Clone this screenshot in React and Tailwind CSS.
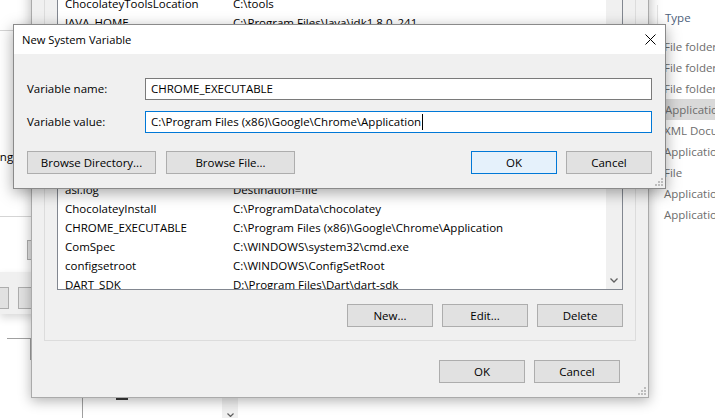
import React from "react"

const topRows = [
  { name: "ChocolateyToolsLocation", value: "C:\\tools" },
  { name: "JAVA_HOME", value: "C:\\Program Files\\Java\\jdk1.8.0_241" },
]

const bottomRows = [
  { name: "asl.log", value: "Destination=file" },
  { name: "ChocolateyInstall", value: "C:\\ProgramData\\chocolatey" },
  { name: "CHROME_EXECUTABLE", value: "C:\\Program Files (x86)\\Google\\Chrome\\Application" },
  { name: "ComSpec", value: "C:\\WINDOWS\\system32\\cmd.exe" },
  { name: "configsetroot", value: "C:\\WINDOWS\\ConfigSetRoot" },
  { name: "DART_SDK", value: "D:\\Program Files\\Dart\\dart-sdk" },
]

const types = [
  "File folder",
  "File folder",
  "File folder",
  "Application",
  "XML Document",
  "Application",
  "File",
  "Application",
  "Application",
]

function Grip() {
  return (
    <svg width="8" height="8" viewBox="0 0 8 8" className="absolute right-[2px] bottom-[2px]">
      <rect x="6" y="0" width="2" height="2" fill="#bdbdbd" />
      <rect x="3" y="3" width="2" height="2" fill="#bdbdbd" />
      <rect x="6" y="3" width="2" height="2" fill="#bdbdbd" />
      <rect x="0" y="6" width="2" height="2" fill="#bdbdbd" />
      <rect x="3" y="6" width="2" height="2" fill="#bdbdbd" />
      <rect x="6" y="6" width="2" height="2" fill="#bdbdbd" />
    </svg>
  )
}

function Btn({ children, w = "w-[86px]", primary = false }) {
  return (
    <div
      className={`${w} h-[23px] flex items-center justify-center border ${
        primary ? "border-[#0078d7] bg-[#e5f1fb]" : "border-[#adadad] bg-[#e1e1e1]"
      }`}
    >
      {children}
    </div>
  )
}

function Row({ name, value }) {
  return (
    <div className="h-[19px] flex items-center shrink-0 whitespace-nowrap">
      <span className="w-[175px] pl-[7px]">{name}</span>
      <span>{value}</span>
    </div>
  )
}

export default function App() {
  return (
    <div className="relative w-[715px] h-[418px] overflow-hidden bg-white text-[11.5px] leading-none text-black font-['Open_Sans',sans-serif]">
      {/* left background window bits */}
      <div className="absolute left-0 top-[30px] w-[40px] h-px bg-[#d5d5d5]" />
      <span className="absolute left-[-24px] top-[151px]">Settings</span>
      <div className="absolute left-0 top-[216px] w-[31px] h-px bg-[#d5d5d5]" />
      <div className="absolute left-[27px] top-[240px] w-[10px] h-[20px] border border-[#adadad] bg-[#e1e1e1]" />
      <div className="absolute left-0 top-[272px] w-[40px] h-[42px] bg-[#f0f0f0] shadow-[0_4px_8px_rgba(0,0,0,0.15)]">
        <div className="absolute left-[-20px] top-[15px] w-[29px] h-[22px] border border-[#adadad] bg-[#e1e1e1]" />
        <div className="absolute left-[18px] top-[15px] w-[30px] h-[22px] border border-[#adadad] bg-[#e1e1e1]" />
      </div>
      <div className="absolute left-[7px] top-[338px] w-[24px] h-px bg-[#a0a0a0]" />
      <div className="absolute left-[30px] top-[338px] w-px h-[22px] bg-[#a0a0a0]" />
      <div className="absolute left-[82px] top-[390px] w-px h-[30px] bg-[#a0a0a0]" />
      <div className="absolute left-[116px] top-[394px] w-[12px] h-[6px] bg-[#3a3a3a]" />
      <div className="absolute left-[222px] top-[390px] w-[16px] h-[30px] bg-[#f0f0f0] flex items-end justify-center pb-[3px]">
        <svg width="7" height="4" viewBox="0 0 7 4">
          <polyline points="0.5,0.5 3.5,3.5 6.5,0.5" fill="none" stroke="#606060" strokeWidth="1.2" />
        </svg>
      </div>

      {/* explorer behind on the right */}
      <div className="absolute left-[657px] top-0 w-[80px] h-full text-[#6d6d6d] text-[11.5px] flex flex-col">
        <div className="mt-[5px] h-[26px] border-l border-[#e5e5e5] pl-[7px] flex items-center text-[#4c607a]">
          Type
        </div>
        <div className="mt-[5px] flex flex-col">
          {types.map((t, i) => (
            <div
              key={i}
              className={`h-[21px] pl-[7px] flex items-center whitespace-nowrap ${
                i === 3 ? "bg-[#d9d9d9] ml-px pl-[6px]" : ""
              }`}
            >
              {t}
            </div>
          ))}
        </div>
      </div>

      {/* Environment Variables dialog */}
      <div className="absolute left-[31px] top-[-40px] w-[618px] h-[438px] bg-[#f0f0f0] border border-[#aaaaaa] shadow-[0_3px_12px_rgba(0,0,0,0.3)] flex flex-col pt-[9px]">
        <div className="mx-[12px] h-[371px] border border-[#dcdcdc] flex flex-col">
          <div className="mt-[9px] mx-[12px] h-[310px] border border-[#828790] bg-white flex">
            <div className="flex-1 flex flex-col overflow-hidden pt-[13px]">
              {topRows.map((r) => (
                <Row key={r.name} {...r} />
              ))}
              <div className="h-[148px] shrink-0" />
              {bottomRows.map((r) => (
                <Row key={r.name} {...r} />
              ))}
            </div>
            <div className="w-[16px] bg-[#f0f0f0] flex flex-col justify-end items-center pb-[6px]">
              <svg width="8" height="5" viewBox="0 0 8 5">
                <polyline points="0.5,0.5 4,4 7.5,0.5" fill="none" stroke="#606060" strokeWidth="1.3" />
              </svg>
            </div>
          </div>
          <div className="mt-[14px] pr-[12px] flex justify-end gap-[9px]">
            <Btn w="w-[86px]">New...</Btn>
            <Btn w="w-[86px]">Edit...</Btn>
            <Btn w="w-[86px]">Delete</Btn>
          </div>
        </div>
        <div className="mt-[19px] pr-[28px] flex justify-end gap-[9px]">
          <Btn>OK</Btn>
          <Btn>Cancel</Btn>
        </div>
        <Grip />
      </div>

      {/* New System Variable dialog */}
      <div className="absolute left-[13px] top-[24px] w-[653px] h-[165px] border border-[#8a8a8a] bg-[#f0f0f0] shadow-[0_4px_14px_rgba(0,0,0,0.35)] flex flex-col">
        <div className="h-[29px] bg-white flex items-center justify-between pl-[8px] pr-[9px] text-[11.2px]">
          <span>New System Variable</span>
          <svg width="11" height="11" viewBox="0 0 11 11">
            <path d="M0.5 0.5 L10.5 10.5 M10.5 0.5 L0.5 10.5" stroke="#000" strokeWidth="1" />
          </svg>
        </div>
        <div className="flex flex-col px-[13px] pt-[24px]">
          <div className="flex items-center h-[22px]">
            <span className="w-[118px]">Variable name:</span>
            <div className="flex-1 h-[22px] border border-[#7a7a7a] bg-white flex items-center pl-[5px]">
              CHROME_EXECUTABLE
            </div>
          </div>
          <div className="flex items-center h-[22px] mt-[11px]">
            <span className="w-[118px]">Variable value:</span>
            <div className="flex-1 h-[22px] border border-[#0078d7] bg-white flex items-center pl-[5px]">
              <span>C:\Program Files (x86)\Google\Chrome\Application</span>
              <span className="w-px h-[16px] bg-black ml-px" />
            </div>
          </div>
          <div className="flex items-center mt-[18px] gap-[10px]">
            <Btn w="w-[129px]">Browse Directory...</Btn>
            <Btn w="w-[129px]">Browse File...</Btn>
            <div className="flex-1" />
            <div className="flex gap-[9px]">
              <Btn primary>OK</Btn>
              <Btn>Cancel</Btn>
            </div>
          </div>
        </div>
        <Grip />
      </div>
    </div>
  )
}
